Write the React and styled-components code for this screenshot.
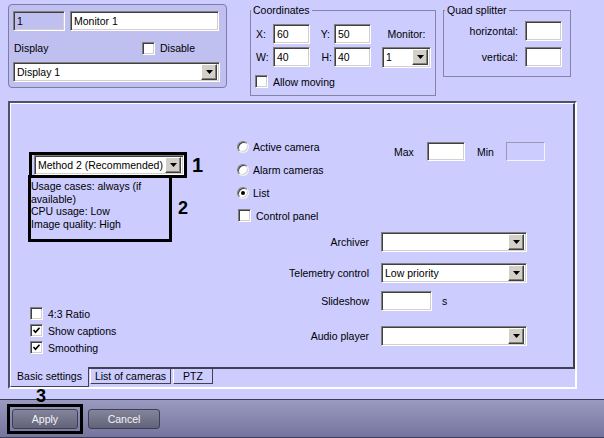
import React from 'react';
import styled, { createGlobalStyle } from 'styled-components';

const GlobalStyle = createGlobalStyle`
  html, body { margin: 0; padding: 0; background: #ccccff; }
  body {
    font-family: "Liberation Sans", Arial, sans-serif;
    font-size: 10.5px;
    color: #000;
  }
  * { box-sizing: border-box; }
`;

const Window = styled.div`
  width: 604px;
  height: 438px;
  overflow: hidden;
  background: #ccccff;
  display: flex;
  flex-direction: column;
`;

const TopRow = styled.div`
  height: 101px;
  display: flex;
  align-items: flex-start;
`;

const DevicePanel = styled.div`
  margin: 4px 0 0 8px;
  width: 219px;
  height: 84px;
  border: 1px solid #7c7ca6;
  border-radius: 4px;
  background: #bfbff0;
  padding: 6px 0 0 4px;
  display: flex;
  flex-direction: column;
`;

const Row = styled.div`
  display: flex;
  align-items: center;
  gap: ${p => p.$gap || 0}px;
  margin-top: ${p => p.$mt || 0}px;
  height: ${p => (p.$h ? p.$h + 'px' : 'auto')};
`;

const Field = styled.div`
  width: ${p => p.$w}px;
  height: ${p => p.$h || 20}px;
  flex: none;
  background: ${p => p.$bg || '#fff'};
  border: 1px solid;
  border-color: #808080 #fff #fff #808080;
  box-shadow: inset 1px 1px 0 #404040, inset -1px -1px 0 #d4d0c8;
  padding: 0 2px 0 3px;
  display: flex;
  align-items: center;
  white-space: nowrap;
  overflow: hidden;
`;

const DisabledField = styled.div`
  width: ${p => p.$w}px;
  height: ${p => p.$h || 20}px;
  border: 1px solid;
  border-color: #9a9aae #f4f4ff #f4f4ff #9a9aae;
  background: #ccccff;
`;

const DropButton = styled.div`
  width: 16px;
  height: 16px;
  margin-left: auto;
  flex: none;
  background: #d4d0c8;
  border: 1px solid;
  border-color: #fff #404040 #404040 #fff;
  box-shadow: inset -1px -1px 0 #808080;
  display: flex;
  align-items: center;
  justify-content: center;
`;

const Select = ({ w, value, h }) => (
  <Field $w={w} $h={h} style={{ paddingRight: 2 }}>
    <span>{value}</span>
    <DropButton>
      <svg width="7" height="4" viewBox="0 0 7 4">
        <path d="M0 0 H7 L3.5 4 Z" fill="#000" />
      </svg>
    </DropButton>
  </Field>
);

const Box = styled.span`
  width: 13px;
  height: 13px;
  flex: none;
  background: #fff;
  border: 1px solid;
  border-color: #808080 #fff #fff #808080;
  box-shadow: inset 1px 1px 0 #404040, inset -1px -1px 0 #d4d0c8;
  display: flex;
  align-items: center;
  justify-content: center;
`;

const Checkbox = ({ checked }) => (
  <Box>
    {checked && (
      <svg width="9" height="9" viewBox="0 0 9 9">
        <path d="M1.5 4 L3.5 6.2 L7.5 1.8" fill="none" stroke="#000" strokeWidth="1.7" />
      </svg>
    )}
  </Box>
);

const RadioCircle = styled.span`
  width: 12px;
  height: 12px;
  flex: none;
  border-radius: 50%;
  background: #fff;
  border: 1px solid;
  border-color: #808080 #f0f0f0 #f0f0f0 #808080;
  box-shadow: inset 1px 1px 0 #404040, inset -1px -1px 0 #d4d0c8;
  display: flex;
  align-items: center;
  justify-content: center;
  &::after {
    content: '';
    width: 4px;
    height: 4px;
    border-radius: 50%;
    background: ${p => (p.$on ? '#000' : 'transparent')};
  }
`;

const Group = styled.fieldset`
  margin: 4px 0 0 ${p => p.$ml}px;
  width: ${p => p.$w}px;
  height: ${p => p.$h}px;
  border: 1px solid #8484a6;
  padding: ${p => p.$pad};
  min-width: 0;
  legend {
    padding: 0 2px;
    margin-left: ${p => p.$lm}px;
    line-height: 13px;
  }
`;

const CoordGrid = styled.div`
  display: grid;
  grid-template-columns: 17px 37px 24px 37px 11px 49px;
  grid-template-rows: 20px 20px;
  row-gap: 3px;
  align-items: center;
`;

const GridLabel = styled.span`
  text-align: ${p => p.$align || 'left'};
  padding-right: ${p => p.$pr || 0}px;
  grid-column: ${p => p.$col || 'auto'};
  justify-self: ${p => p.$justify || 'stretch'};
`;

const QuadGrid = styled.div`
  display: grid;
  grid-template-columns: 1fr 37px;
  grid-template-rows: 20px 20px;
  column-gap: 7px;
  row-gap: 6px;
  align-items: center;
`;

const Frame = styled.div`
  margin-left: 8px;
  width: 569px;
  height: 288px;
  border: 2px solid;
  border-color: #50506a #fff #fff #50506a;
  display: flex;
  flex-direction: column;
`;

const TabPage = styled.div`
  height: 264px;
  border-top: 1px solid #fff;
  border-left: 1px solid #fff;
  border-right: 2px solid #404050;
  display: flex;
`;

const LeftCol = styled.div`
  width: 215px;
  display: flex;
  flex-direction: column;
  padding: 48px 0 11px 17px;
`;

const RightCol = styled.div`
  flex: 1;
  padding: 31px 0 0 11px;
  display: flex;
  flex-direction: column;
`;

const MarkBox = styled.div`
  border: 3px solid #000;
  width: ${p => p.$w}px;
  height: ${p => p.$h}px;
  margin-left: ${p => p.$ml || 0}px;
  flex: none;
`;

const MethodBox = styled(MarkBox)`
  display: flex;
  align-items: center;
  padding-left: 2px;
`;

const InfoBox = styled(MarkBox)`
  padding-top: 2px;
  line-height: 12.7px;
  white-space: nowrap;
`;

const Mark = styled.span`
  font-weight: bold;
  font-size: ${p => p.$size || 18}px;
  line-height: ${p => p.$lh || 'normal'};
  margin-left: ${p => p.$ml || 0}px;
  position: relative;
  z-index: 1;
`;

const CheckList = styled.div`
  margin-top: auto;
  padding-left: 2px;
  display: flex;
  flex-direction: column;
`;

const CheckRow = styled.label`
  height: ${p => p.$h || 17}px;
  display: flex;
  align-items: center;
  gap: 5px;
  margin-left: ${p => p.$ml || 0}px;
`;

const TopArea = styled.div`
  display: flex;
  align-items: flex-start;
`;

const RadioGroup = styled.div`
  width: 157px;
  display: flex;
  flex-direction: column;
`;

const RadioRow = styled.label`
  height: 23px;
  display: flex;
  align-items: center;
  gap: 4px;
`;

const RangeRow = styled.div`
  margin-top: 7px;
  height: 19px;
  display: flex;
  align-items: center;
`;

const RangeLabel = styled.span`
  width: ${p => p.$w}px;
  margin-left: ${p => p.$ml || 0}px;
`;

const FormRow = styled.div`
  margin-top: ${p => p.$mt}px;
  display: grid;
  grid-template-columns: 132px auto;
  column-gap: 12px;
  align-items: center;
  justify-content: start;
`;

const FormLabel = styled.span`
  text-align: right;
`;

const TabStrip = styled.div`
  height: 20px;
  display: flex;
`;

const ActiveTab = styled.div`
  width: 79px;
  border-left: 1px solid #fff;
  border-right: 1px solid #404050;
  border-bottom: 1px solid #404050;
  display: flex;
  justify-content: center;
  padding-top: 3px;
`;

const TabSlot = styled.div`
  border-top: 2px solid #404050;
  flex: ${p => (p.$fill ? 1 : 'none')};
  padding-left: ${p => p.$pl || 0}px;
`;

const Tab = styled.div`
  width: ${p => p.$w}px;
  height: 15px;
  border-left: 1px solid #fff;
  border-right: 1px solid #404050;
  border-bottom: 1px solid #404050;
  display: flex;
  justify-content: center;
  align-items: center;
`;

const MarkStrip = styled.div`
  height: 10px;
  padding-left: 36px;
`;

const ButtonBar = styled.div`
  height: 39px;
  background: linear-gradient(#9a9ac0, #74749e);
  border-top: 1px solid #3c3c52;
  border-bottom: 1px solid #3c3c52;
  display: flex;
  align-items: flex-start;
  padding: 4px 0 0 7px;
`;

const ApplyBox = styled.div`
  border: 3px solid #000;
  padding: 2px;
`;

const Button = styled.button`
  width: ${p => p.$w}px;
  height: 20px;
  margin: ${p => p.$m || 0};
  border: 1px solid #3e3e52;
  border-radius: 3px;
  background: linear-gradient(#84849a, #626278);
  color: #f4f4f8;
  font-family: inherit;
  font-size: 10.5px;
  padding: 0;
`;

export default function App() {
  return (
    <Window>
      <GlobalStyle />
      <TopRow>
        <DevicePanel>
          <Row $gap={5}>
            <Field $w={52} $bg="#bfbff0">1</Field>
            <Field $w={149}>Monitor 1</Field>
          </Row>
          <Row $mt={9} $h={16}>
            <span style={{ width: 129, paddingLeft: 1 }}>Display</span>
            <CheckRow as="label" $h={16}>
              <Checkbox />
              <span>Disable</span>
            </CheckRow>
          </Row>
          <Row $mt={6}>
            <Select w={207} value="Display 1" />
          </Row>
        </DevicePanel>

        <Group $ml={23} $w={186} $h={92} $lm={-5} $pad="7px 4px 0 5px">
          <legend>Coordinates</legend>
          <CoordGrid>
            <GridLabel>X:</GridLabel>
            <Field $w={37}>60</Field>
            <GridLabel $align="right" $pr={4}>Y:</GridLabel>
            <Field $w={37}>50</Field>
            <GridLabel $col="6" $justify="center">Monitor:</GridLabel>
            <GridLabel>W:</GridLabel>
            <Field $w={37}>40</Field>
            <GridLabel $align="right" $pr={2}>H:</GridLabel>
            <Field $w={37}>40</Field>
            <span style={{ gridColumn: 6 }}>
              <Select w={49} h={21} value="1" />
            </span>
          </CoordGrid>
          <CheckRow $h={13} style={{ marginTop: 8 }} $ml={-1}>
            <Checkbox />
            <span>Allow moving</span>
          </CheckRow>
        </Group>

        <Group $ml={7} $w={128} $h={73} $lm={-3} $pad="4px 8px 0 4px">
          <legend>Quad splitter</legend>
          <QuadGrid>
            <GridLabel $align="right">horizontal:</GridLabel>
            <Field $w={37} />
            <GridLabel $align="right">vertical:</GridLabel>
            <Field $w={37} />
          </QuadGrid>
        </Group>
      </TopRow>

      <Frame>
        <TabPage>
          <LeftCol>
            <Row>
              <MethodBox $w={158} $h={26} $ml={1}>
                <Select w={150} value="Method 2 (Recommended)" />
              </MethodBox>
              <Mark $size={20} $ml={5}>1</Mark>
            </Row>
            <Row style={{ marginTop: -3 }}>
              <InfoBox $w={144} $h={67}>
                Usage cases: always (if<br />
                available)<br />
                CPU usage: Low<br />
                Image quality: High
              </InfoBox>
              <Mark $ml={6}>2</Mark>
            </Row>
            <CheckList>
              <CheckRow>
                <Checkbox />
                <span>4:3 Ratio</span>
              </CheckRow>
              <CheckRow>
                <Checkbox checked />
                <span>Show captions</span>
              </CheckRow>
              <CheckRow>
                <Checkbox checked />
                <span>Smoothing</span>
              </CheckRow>
            </CheckList>
          </LeftCol>

          <RightCol>
            <TopArea>
              <RadioGroup>
                <RadioRow>
                  <RadioCircle />
                  <span>Active camera</span>
                </RadioRow>
                <RadioRow>
                  <RadioCircle />
                  <span>Alarm cameras</span>
                </RadioRow>
                <RadioRow>
                  <RadioCircle $on />
                  <span>List</span>
                </RadioRow>
                <CheckRow $h={23} $ml={1}>
                  <Checkbox />
                  <span>Control panel</span>
                </CheckRow>
              </RadioGroup>
              <RangeRow>
                <RangeLabel $w={33}>Max</RangeLabel>
                <Field $w={38} $h={19} />
                <RangeLabel $w={29} $ml={12}>Min</RangeLabel>
                <DisabledField $w={39} $h={19} />
              </RangeRow>
            </TopArea>

            <FormRow $mt={5}>
              <FormLabel>Archiver</FormLabel>
              <Select w={146} value="" />
            </FormRow>
            <FormRow $mt={11}>
              <FormLabel>Telemetry control</FormLabel>
              <Select w={146} value="Low priority" />
            </FormRow>
            <FormRow $mt={8}>
              <FormLabel>Slideshow</FormLabel>
              <Row $gap={10}>
                <Field $w={51} />
                <span>s</span>
              </Row>
            </FormRow>
            <FormRow $mt={15}>
              <FormLabel>Audio player</FormLabel>
              <Select w={146} value="" />
            </FormRow>
          </RightCol>
        </TabPage>

        <TabStrip>
          <ActiveTab>Basic settings</ActiveTab>
          <TabSlot $pl={1}>
            <Tab $w={81}>List of cameras</Tab>
          </TabSlot>
          <TabSlot $pl={2}>
            <Tab $w={40}>PTZ</Tab>
          </TabSlot>
          <TabSlot $fill />
        </TabStrip>
      </Frame>

      <MarkStrip>
        <Mark $lh="14px">3</Mark>
      </MarkStrip>
      <ButtonBar>
        <ApplyBox>
          <Button $w={66}>Apply</Button>
        </ApplyBox>
        <Button $w={72} $m="5px 0 0 5px">Cancel</Button>
      </ButtonBar>
    </Window>
  );
}
